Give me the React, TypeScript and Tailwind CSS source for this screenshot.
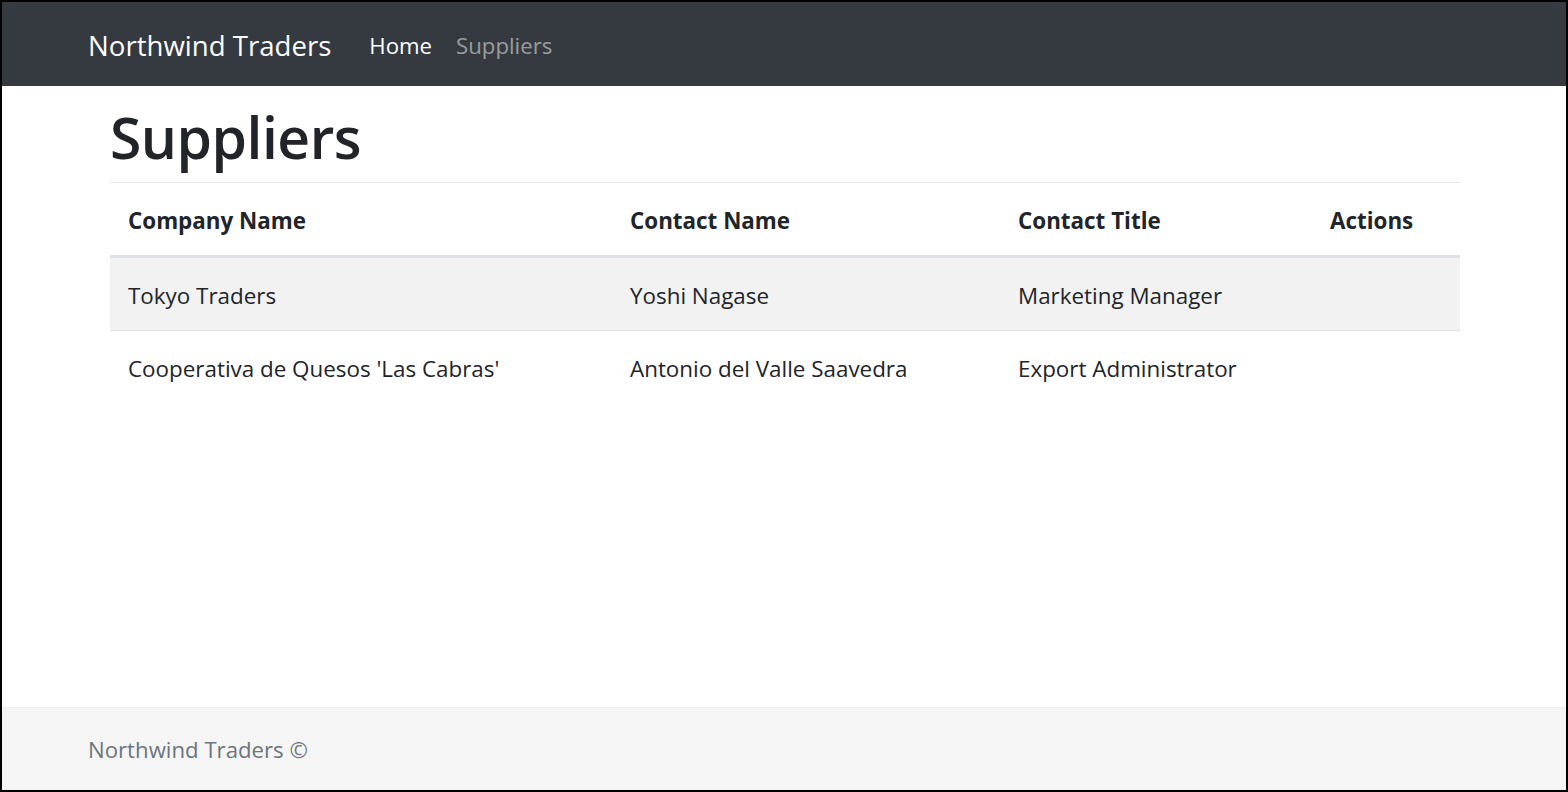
import React from 'react';

interface Supplier {
  id: number;
  companyName: string;
  contactName: string;
  contactTitle: string;
}

const suppliers: Supplier[] = [
  { id: 4, companyName: 'Tokyo Traders', contactName: 'Yoshi Nagase', contactTitle: 'Marketing Manager' },
  {
    id: 5,
    companyName: "Cooperativa de Quesos 'Las Cabras'",
    contactName: 'Antonio del Valle Saavedra',
    contactTitle: 'Export Administrator',
  },
];

export default function App() {
  return (
    <div className="h-[792px] border-2 border-black flex flex-col bg-white text-[#212529] font-['Open_Sans',sans-serif] overflow-hidden">
      {/* Navbar */}
      <nav className="h-[84px] shrink-0 bg-[#343a40] flex items-center px-[86px] pt-[3px]">
        <a className="text-[27.6px] text-white mr-[26px]">Northwind Traders</a>
        <a className="text-[22.2px] text-white px-[12px]">Home</a>
        <a className="text-[22.2px] text-white/50 px-[12px]">Suppliers</a>
      </nav>

      {/* Main */}
      <main className="flex-1 pl-[108px] pr-[106px]">
        <h1 className="text-[57px] leading-[72px] font-semibold tracking-[-0.5px] mt-[15px] mb-[9px]">Suppliers</h1>
        <hr className="border-t border-[#e5e5e5] mt-0" />
        <table className="w-full table-fixed text-[22.4px] leading-[36px] border-collapse">
          <thead>
            <tr className="border-b-[3px] border-[#dee2e6]">
              <th className="w-[502px] pt-[20px] pb-[16px] px-[18px] text-left font-bold">Company Name</th>
              <th className="w-[388px] pt-[20px] pb-[16px] px-[18px] text-left font-bold">Contact Name</th>
              <th className="w-[312px] pt-[20px] pb-[16px] px-[18px] text-left font-bold">Contact Title</th>
              <th className="pt-[20px] pb-[16px] px-[18px] text-left font-bold">Actions</th>
            </tr>
          </thead>
          <tbody>
            {suppliers.map((s, i) => (
              <tr key={s.id} className={i % 2 === 0 ? 'bg-[#f2f2f2] border-b border-[#dee2e6]' : ''}>
                <td className="pt-[20px] pb-[16px] px-[18px]">{s.companyName}</td>
                <td className="pt-[20px] pb-[16px] px-[18px]">{s.contactName}</td>
                <td className="pt-[20px] pb-[16px] px-[18px]">{s.contactTitle}</td>
                <td className="pt-[20px] pb-[16px] px-[18px]"></td>
              </tr>
            ))}
          </tbody>
        </table>
      </main>

      {/* Footer */}
      <footer className="h-[83px] shrink-0 bg-[#f5f5f5] border-t border-[#ebebeb] flex items-center px-[86px] pt-[2px]">
        <span className="text-[22.2px] text-[#6c757d]">Northwind Traders ©</span>
      </footer>
    </div>
  );
}
